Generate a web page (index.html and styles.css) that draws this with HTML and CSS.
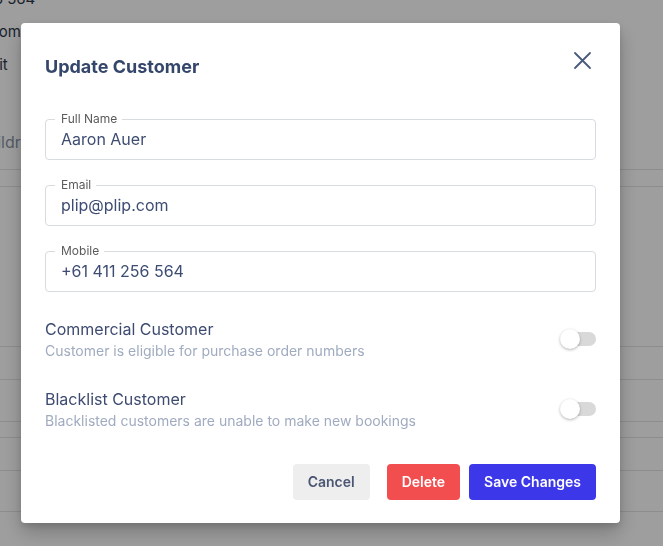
FILE: index.html
```html
<!DOCTYPE html>
<html lang="en">
<head>
<meta charset="utf-8">
<title>Update Customer</title>
<link rel="stylesheet" href="styles.css">
</head>
<body>
<div class="page">
  <div class="bg-lines">
    <div class="bg-text">+61 411 256 564</div>
    <div class="bg-text">plip@plip.com</div>
    <div class="bg-text bg-edit">Edit</div>
  </div>
  <div class="bg-label">Children</div>
  <div class="bg-table">
    <div class="bg-row"></div>
    <div class="bg-row"></div>
    <div class="bg-row"></div>
    <div class="bg-row"></div>
    <div class="bg-row"></div>
    <div class="bg-row"></div>
    <div class="bg-row"></div>
    <div class="bg-row"></div>
  </div>
</div>

<div class="overlay">
  <div class="modal">
    <div class="modal-header">
      <h2 class="modal-title">Update Customer</h2>
      <button class="close-btn" type="button" aria-label="Close">
        <svg width="24" height="24" viewBox="0 0 24 24" fill="none" stroke="#4a5a7c" stroke-width="1.8" stroke-linecap="round">
          <path d="M3 3L18 18M18 3L3 18"/>
        </svg>
      </button>
    </div>

    <div class="fields">
      <fieldset class="field">
        <legend class="field-label">Full Name</legend>
        <input class="field-input" type="text" value="Aaron Auer">
      </fieldset>
      <fieldset class="field">
        <legend class="field-label">Email</legend>
        <input class="field-input" type="text" value="plip@plip.com">
      </fieldset>
      <fieldset class="field">
        <legend class="field-label">Mobile</legend>
        <input class="field-input" type="text" value="+61 411 256 564">
      </fieldset>
    </div>

    <div class="switches">
      <div class="switch-row">
        <div class="switch-text">
          <div class="switch-title">Commercial Customer</div>
          <div class="switch-desc">Customer is eligible for purchase order numbers</div>
        </div>
        <div class="toggle"><span class="knob"></span></div>
      </div>
      <div class="switch-row">
        <div class="switch-text">
          <div class="switch-title">Blacklist Customer</div>
          <div class="switch-desc">Blacklisted customers are unable to make new bookings</div>
        </div>
        <div class="toggle"><span class="knob"></span></div>
      </div>
    </div>

    <div class="actions">
      <button class="btn btn-cancel" type="button">Cancel</button>
      <button class="btn btn-delete" type="button">Delete</button>
      <button class="btn btn-save" type="button">Save Changes</button>
    </div>
  </div>
</div>
</body>
</html>
```

FILE: styles.css
```css
* { box-sizing: border-box; }

html, body {
  margin: 0;
  padding: 0;
  height: 100%;
  overflow: hidden;
}

body {
  background: #ffffff;
  font-family: Inter, "Noto Sans", "Liberation Sans", sans-serif;
}

/* background page */
.page {
  width: 100%;
}

.bg-lines {
  margin: -18px 0 0 -80px;
}

.bg-text {
  font-size: 15px;
  line-height: 33px;
  color: #2d3748;
  white-space: nowrap;
}

.bg-edit {
  margin-left: 61px;
}

.bg-label {
  margin: 45px 0 0 -24px;
  font-size: 16px;
  line-height: 33px;
  color: #8a94a6;
}

.bg-table {
  display: grid;
  grid-template-rows: 11px 17px 160px 33px 42px 16px 33px 41px;
}

.bg-row {
  border-bottom: 1px solid #e4e4e4;
}

/* overlay + modal */
.overlay {
  position: fixed;
  inset: 0;
  background: rgba(0, 0, 0, 0.38);
  padding: 23px 0 0 21px;
}

.modal {
  width: 599px;
  background: #ffffff;
  border-radius: 4px;
  padding: 30px 24px 23px 24px;
  box-shadow: 0 10px 20px rgba(0, 0, 0, 0.22), 0 3px 6px rgba(0, 0, 0, 0.12);
}

.modal-header {
  display: flex;
  justify-content: space-between;
  align-items: flex-start;
  height: 28px;
}

.modal-title {
  margin: 0;
  font-size: 18px;
  line-height: 28px;
  font-weight: 700;
  color: #35466b;
}

.close-btn {
  margin: -3px 0 0 0;
  padding: 0;
  border: none;
  background: none;
  width: 24px;
  height: 24px;
  display: flex;
}

.fields {
  margin-top: 31px;
  display: flex;
  flex-direction: column;
  gap: 18px;
}

.field {
  margin: 0;
  min-width: 0;
  border: 1px solid #d8dbe0;
  border-radius: 4px;
  padding: 0 15px 7px 15px;
}

.field-label {
  margin-left: -6px;
  padding: 0 5px 0 6px;
  font-size: 12px;
  line-height: 14px;
  color: #5b5b5b;
}

.field-input {
  display: block;
  width: 100%;
  height: 26px;
  border: none;
  outline: none;
  padding: 0;
  margin: 0;
  background: transparent;
  font-family: inherit;
  font-size: 16px;
  color: #3d4c72;
}

.switches {
  margin-top: 25px;
  display: flex;
  flex-direction: column;
  gap: 26px;
}

.switch-row {
  display: flex;
  justify-content: space-between;
  align-items: center;
}

.switch-title {
  font-size: 16px;
  line-height: 24px;
  color: #3e4b70;
}

.switch-desc {
  font-size: 14px;
  line-height: 20px;
  color: #a0abc0;
}

.toggle {
  position: relative;
  width: 36px;
  height: 20px;
  display: flex;
  align-items: center;
  justify-content: flex-end;
}

.toggle::before {
  content: "";
  display: block;
  width: 34px;
  height: 14px;
  border-radius: 7px;
  background: #d9d9d9;
}

.knob {
  position: absolute;
  left: 0;
  top: 0;
  width: 20px;
  height: 20px;
  border-radius: 50%;
  background: #ffffff;
  box-shadow: 0 1px 3px rgba(0, 0, 0, 0.3);
}

.actions {
  margin-top: 33px;
  display: flex;
  justify-content: flex-end;
  gap: 9px;
}

.btn {
  height: 36px;
  border: none;
  border-radius: 4px;
  padding: 0 15px;
  font-family: inherit;
  font-size: 14px;
  font-weight: 600;
  line-height: 36px;
}

.btn-cancel {
  background: #eeeeef;
  color: #4a5672;
  margin-right: 8px;
}

.btn-delete {
  background: #f24e50;
  color: #ffffff;
}

.btn-save {
  background: #3c37e8;
  color: #ffffff;
}
```
